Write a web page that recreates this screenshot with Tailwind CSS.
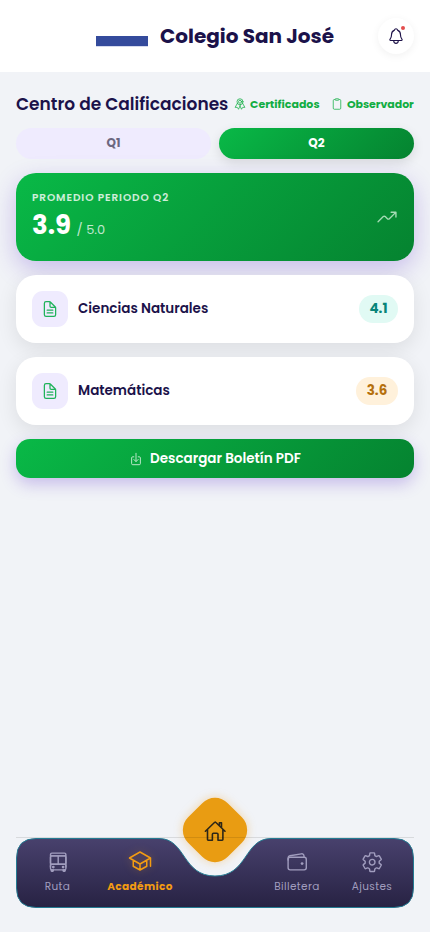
<!DOCTYPE html>
<html lang="es">
<head>
<meta charset="utf-8">
<meta name="viewport" content="width=device-width, initial-scale=1">
<title>Colegio San José</title>
<script src="https://cdn.jsdelivr.net/npm/@tailwindcss/browser@4"></script>
</head>
<body class="bg-[#f1f3f7] font-['Poppins','Inter',sans-serif] text-[#1b124a]">
<svg class="hidden">
  <symbol id="doc" viewBox="0 0 512 512"><path d="M416 221.25V416a48 48 0 01-48 48H144a48 48 0 01-48-48V96a48 48 0 0148-48h98.75a32 32 0 0122.62 9.37l141.26 141.26a32 32 0 019.37 22.62zM256 56v120a32 32 0 0032 32h120M176 288h160M176 368h160"/></symbol>
</svg>
<div class="w-[430px] h-[932px] flex flex-col overflow-hidden relative">
  <header class="h-[72px] shrink-0 bg-white flex items-center pl-24 pr-4">
    <div class="w-[52px] h-[52px] flex flex-col justify-center pt-[11px]"><div class="h-[11px] bg-[#344b9c] border-b border-[#d5daee]"></div></div>
    <h1 class="ml-3 w-[190px] whitespace-nowrap text-[20px] leading-[30px] font-bold">Colegio San José</h1>
    <button class="ml-auto w-9 h-9 rounded-full bg-white shadow-[0_2px_8px_rgba(0,0,0,0.06)] flex items-center justify-center relative">
      <svg class="w-[18px] h-[18px]" viewBox="0 0 512 512" fill="none" stroke="#1e1248" stroke-width="32" stroke-linejoin="round" stroke-linecap="round"><path d="M427.68 351.43C402 320 383.87 304 383.87 217.35 383.87 138 343.35 109.73 310 96c-4.43-1.82-8.6-6-9.95-10.55C294.2 65.54 277.8 48 256 48s-38.21 17.55-44 37.47c-1.35 4.6-5.52 8.71-9.95 10.53-33.39 13.75-73.87 41.92-73.87 121.35C128.13 304 110 320 84.32 351.43 73.68 364.45 83 384 101.61 384h308.88c18.51 0 27.77-19.61 17.19-32.57zM320 384v16a64 64 0 01-128 0v-16"/></svg>
      <span class="absolute w-1 h-1 rounded-full bg-[#e34d4d] right-[9px] top-2"></span>
    </button>
  </header>
  <main class="px-4 pt-[19px] flex flex-col">
    <div class="h-[26px] flex items-center">
      <h2 class="w-[218px] whitespace-nowrap text-[17px] font-semibold pt-px">Centro de Calificaciones</h2>
      <div class="w-[97px] flex items-center text-[#12ad43] whitespace-nowrap">
        <svg class="w-3 h-3 shrink-0 mr-1" viewBox="0 0 512 512" fill="none" stroke="currentColor" stroke-width="32" stroke-linecap="round" stroke-linejoin="round"><circle cx="256" cy="160" r="128"/><circle cx="256" cy="160" r="64"/><path d="M143.65 227.82L48 400l86.86-.42a16 16 0 0113.82 7.8L192 480l88.33-194.32M366.54 224L464 400l-86.86-.42a16 16 0 00-13.82 7.8L320 480l-64-140.8"/></svg>
        <span class="text-[11px] font-bold">Certificados</span>
      </div>
      <div class="flex items-center text-[#12ad43] whitespace-nowrap">
        <svg class="w-3 h-3 shrink-0 mr-1" viewBox="0 0 512 512" fill="none" stroke="currentColor" stroke-width="32" stroke-linejoin="round"><path d="M336 64h32a48 48 0 0148 48v320a48 48 0 01-48 48H144a48 48 0 01-48-48V112a48 48 0 0148-48h32"/><rect x="176" y="32" width="160" height="64" rx="26"/></svg>
        <span class="text-[11px] font-bold tracking-[-0.05px]">Observador</span>
      </div>
    </div>
    <div class="mt-[11px] h-[31px] flex gap-2 text-[12px] leading-[18px] font-bold">
      <button class="flex-1 pb-px rounded-full bg-[#efebfe] text-[#6c6780]">Q1</button>
      <button class="flex-1 pb-px rounded-full bg-linear-135 from-[#09b947] to-[#058330] text-white shadow-[0_4px_12px_rgba(0,0,0,0.11)]">Q2</button>
    </div>
    <section class="mt-[14px] h-[88px] rounded-[20px] bg-linear-135 from-[#09b947] to-[#058330] px-4 flex items-center justify-between text-white shadow-[0_8px_24px_rgba(91,45,200,0.28)]">
      <div class="h-full pt-[17px]">
        <p class="text-[10.5px] leading-4 font-semibold tracking-[0.9px] text-white/80">PROMEDIO PERIODO Q2</p>
        <p class="flex items-baseline leading-[38px] whitespace-nowrap"><span class="text-[26px] font-bold w-[44.5px]">3.9</span><span class="text-[13px] text-white/75">/ 5.0</span></p>
      </div>
      <svg class="w-[22px] h-[22px]" viewBox="0 0 512 512" fill="none" stroke="#a5dbb5" stroke-width="32" stroke-linecap="round" stroke-linejoin="round"><path d="M352 144h112v112M48 368l121.37-121.37a32 32 0 0145.26 0l50.74 50.74a32 32 0 0045.26 0L448 160"/></svg>
    </section>
    <section class="mt-[14px] h-[68px] rounded-[20px] bg-white px-4 flex items-center shadow-[0_6px_20px_rgba(0,0,0,0.09)]">
      <div class="w-9 h-9 rounded-[11px] bg-[#efebfe] flex items-center justify-center"><svg class="w-[18px] h-[18px]" fill="none" stroke="#20b35b" stroke-width="36" stroke-linecap="round" stroke-linejoin="round"><use href="#doc"/></svg></div>
      <h3 class="ml-[10px] text-[13.5px] leading-5 font-semibold">Ciencias Naturales</h3>
      <span class="ml-auto w-[39px] h-7 rounded-full bg-[#e1faf4] text-[#078579] text-[13.5px] leading-5 font-bold flex items-center justify-center">4.1</span>
    </section>
    <section class="mt-[14px] h-[68px] rounded-[20px] bg-white px-4 flex items-center shadow-[0_6px_20px_rgba(0,0,0,0.09)]">
      <div class="w-9 h-9 rounded-[11px] bg-[#efebfe] flex items-center justify-center"><svg class="w-[18px] h-[18px]" fill="none" stroke="#20b35b" stroke-width="36" stroke-linecap="round" stroke-linejoin="round"><use href="#doc"/></svg></div>
      <h3 class="ml-[10px] text-[13.5px] leading-5 font-semibold">Matemáticas</h3>
      <span class="ml-auto w-[42px] h-7 rounded-full bg-[#fff1db] text-[#b5700d] text-[13.5px] leading-5 font-bold flex items-center justify-center">3.6</span>
    </section>
    <button class="mt-[14px] h-[39px] rounded-[14px] bg-linear-135 from-[#09b947] to-[#058330] text-white flex items-center justify-center gap-[7px] shadow-[0_6px_16px_rgba(91,45,200,0.28)]">
      <svg class="w-[14px] h-[14px]" viewBox="0 0 512 512" fill="none" stroke="#d2f0da" stroke-width="32" stroke-linecap="round" stroke-linejoin="round"><path d="M336 176h40a40 40 0 0140 40v208a40 40 0 01-40 40H136a40 40 0 01-40-40V216a40 40 0 0140-40h40M176 272l80 80 80-80M256 48v288"/></svg>
      <span class="text-[13.5px] leading-5 font-semibold pt-px">Descargar Boletín PDF</span>
    </button>
  </main>
  <nav class="mt-auto mb-[24px] mx-4 h-[70px] relative shrink-0">
    <svg class="absolute left-0 top-0 w-[398px] h-[70px]" viewBox="0 0 398 70"><defs><linearGradient id="bar" x1="0" y1="0" x2="0" y2="1"><stop stop-color="#48416d"/><stop offset="1" stop-color="#272243"/></linearGradient></defs><path d="M20 .5H143C170 .5 166 38 199 38C232 38 228 .5 255 .5H378Q397.5 .5 397.5 20V50Q397.5 69.500 378 69.500H20Q.5 69.500 .5 50V20Q.5 .5 20 .5Z" fill="url(#bar)" stroke="#247b92"/></svg>
    <div class="relative h-full flex text-[10.5px] leading-4 text-[#a19dbe] tracking-[0.4px] pt-3">
      <div class="w-[83px] flex flex-col items-center gap-[5px]"><span class="h-6 pl-px flex items-center"><svg class="w-[22.4px] h-[22.4px]" viewBox="0 0 512 512" fill="none" stroke="currentColor" stroke-width="32" stroke-linecap="round" stroke-linejoin="round"><rect x="80" y="112" width="352" height="192" rx="32"/><rect x="80" y="304" width="352" height="128" rx="32"/><path d="M400 112H112A32 32 0 0180 80a32 32 0 0132-32h288a32 32 0 0132 32 32 32 0 01-32 32zM144 432v22a10 10 0 01-10 10h-28a10 10 0 01-10-10v-22zM416 432v22a10 10 0 01-10 10h-28a10 10 0 01-10-10v-22zM256 112v192M80 80v288M432 80v288"/><circle cx="368" cy="368" r="16"/><circle cx="144" cy="368" r="16"/></svg></span><span>Ruta</span></div>
      <div class="w-[82px] flex flex-col items-center gap-[5px] text-[#f39c12] font-bold"><svg class="w-6 h-6 -mt-px mb-px drop-shadow-[0_0_4px_rgba(243,156,18,0.3)]" viewBox="0 0 512 512" fill="none" stroke="currentColor" stroke-width="32" stroke-linecap="round" stroke-linejoin="round"><path d="M32 192L256 64l224 128-224 128zM112 240v128l144 80 144-80V240M480 368V192M256 320v128"/></svg><span>Académico</span></div>
      <div class="w-[75px]"></div>
      <div class="w-[82px] flex flex-col items-center gap-[5px]"><span class="h-6 flex items-center"><svg class="w-[22.4px] h-[22.4px]" viewBox="0 0 512 512" fill="none" stroke="currentColor" stroke-width="32" stroke-linecap="round" stroke-linejoin="round"><rect x="48" y="144" width="416" height="288" rx="48"/><path d="M411.36 144v-30A50 50 0 00352 64.900L88.640 109.850A50 50 0 0048 159v49"/><circle cx="368" cy="288" r="32" fill="currentColor" stroke="none"/></svg></span><span>Billetera</span></div>
      <div class="w-[68px] flex flex-col items-center gap-[5px]"><span class="h-6 flex items-center"><svg class="w-[22.4px] h-[22.4px]" viewBox="0 0 512 512" fill="none" stroke="currentColor" stroke-width="32" stroke-linecap="round" stroke-linejoin="round"><path d="M262.29 192.31a64 64 0 1057.4 57.4 64.13 64.13 0 00-57.4-57.4zM416.39 256a154.34 154.34 0 01-1.53 20.79l45.21 35.46a10.81 10.81 0 012.45 13.75l-42.77 74a10.81 10.81 0 01-13.14 4.59l-44.9-18.08a16.11 16.11 0 00-15.17 1.75A164.48 164.48 0 01325 400.8a15.94 15.94 0 00-8.82 12.14l-6.73 47.89a11.08 11.08 0 01-10.68 9.17h-85.54a11.11 11.11 0 01-10.69-8.87l-6.72-47.82a16.07 16.07 0 00-9-12.22 155.3 155.3 0 01-21.46-12.57 16 16 0 00-15.11-1.71l-44.89 18.07a10.81 10.81 0 01-13.14-4.58l-42.77-74a10.8 10.8 0 012.45-13.75l38.21-30a16.05 16.05 0 006-14.08c-.36-4.17-.58-8.33-.58-12.5s.21-8.27.58-12.35a16 16 0 00-6.07-13.94l-38.19-30A10.81 10.81 0 0149.48 186l42.77-74a10.81 10.81 0 0113.14-4.59l44.9 18.08a16.11 16.11 0 0015.17-1.75A164.48 164.48 0 01187 111.2a15.94 15.94 0 008.82-12.14l6.73-47.89A11.08 11.08 0 01213.23 42h85.54a11.11 11.11 0 0110.69 8.87l6.72 47.82a16.07 16.07 0 009 12.22 155.3 155.3 0 0121.46 12.57 16 16 0 0015.11 1.71l44.89-18.07a10.81 10.81 0 0113.14 4.58l42.77 74a10.8 10.8 0 01-2.45 13.75l-38.21 30a16.05 16.05 0 00-6.05 14.08c.33 4.14.55 8.3.55 12.47z"/></svg></span><span>Ajustes</span></div>
    </div>
    <div class="absolute left-[171px] top-[-36px] w-14 h-14 rounded-[18px] rotate-45 bg-[#e99c12] shadow-[0_0_10px_rgba(243,156,18,0.35)]"></div>
    <svg class="absolute left-[187.500px] top-[-18.500px] w-[22.4px] h-[22.4px]" viewBox="0 0 512 512" fill="none" stroke="#2c2618" stroke-width="36" stroke-linecap="round" stroke-linejoin="round"><path d="M80 212v236a16 16 0 0016 16h96V328a24 24 0 0124-24h80a24 24 0 0124 24v136h96a16 16 0 0016-16V212M480 256L266.89 52c-5-5.28-16.69-5.34-21.78 0L32 256M400 179V64h-48v69"/></svg>
    <div class="absolute left-0 right-0 top-[-1px] h-px bg-black/10"></div>
  </nav>
</div>
</body>
</html>
